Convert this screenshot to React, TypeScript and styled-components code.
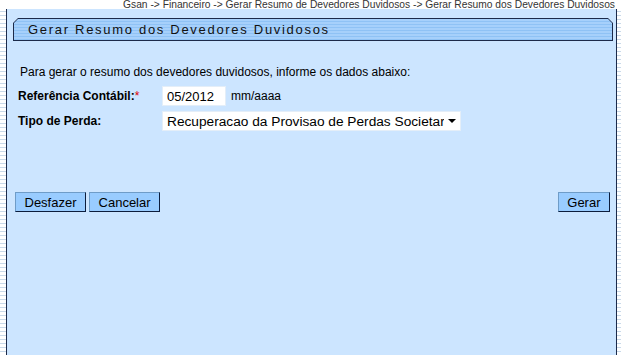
import React from 'react'
import styled, { createGlobalStyle } from 'styled-components'

const GlobalStyle = createGlobalStyle`
  html, body {
    margin: 0;
    padding: 0;
    height: 100%;
  }
  body {
    font-family: 'Liberation Sans', Arial, sans-serif;
    background: repeating-linear-gradient(
      to bottom,
      #ffffff 0px,
      #ffffff 3px,
      #c9d9e9 3px,
      #c9d9e9 4px
    );
  }
  #root {
    height: 100%;
  }
`

const Page = styled.div`
  display: flex;
  flex-direction: column;
  height: 355px;
`

const Crumb = styled.div`
  height: 9px;
  line-height: 9px;
  font-size: 10.25px;
  color: #333;
  text-align: right;
  padding-right: 6px;
  white-space: nowrap;
  background: #fff;
`

const Panel = styled.div`
  flex: 1;
  margin: 0 4px 0 6px;
  border-left: 1px solid #1c2a4a;
  border-right: 1px solid #1c2a4a;
  background: #cce5ff;
  padding: 9px 3px 0 6px;
  display: flex;
  flex-direction: column;
`

const TitleBar = styled.div`
  height: 23px;
  background: #1c2a4a;
  clip-path: polygon(5px 0, calc(100% - 5px) 0, 100% 5px, 100% 100%, 0 100%, 0 5px);
  padding: 1px;
  box-sizing: border-box;
`

const TitleInner = styled.div`
  height: 100%;
  clip-path: polygon(4px 0, calc(100% - 4px) 0, 100% 4px, 100% 100%, 0 100%, 0 4px);
  background: repeating-linear-gradient(
    to bottom,
    #a6d0fb 0px,
    #a6d0fb 2px,
    #8fc2f5 2px,
    #8fc2f5 3px
  );
  display: flex;
  align-items: center;
  padding-left: 14px;
  font-size: 13px;
  letter-spacing: 1.7px;
  color: #111;
`

const Intro = styled.p`
  margin: 24px 0 0 7px;
  font-size: 12px;
  line-height: 14px;
  color: #000;
`

const Row = styled.div<{ $gap: number }>`
  display: flex;
  align-items: center;
  margin-top: ${p => p.$gap}px;
  padding-left: 5px;
  height: 20px;
`

const Label = styled.label`
  width: 144px;
  font-size: 12px;
  font-weight: bold;
  color: #000;
`

const Required = styled.span`
  color: #e00000;
  font-weight: normal;
`

const TextInput = styled.input`
  box-sizing: border-box;
  width: 64px;
  height: 20px;
  border: 1px solid #e4eef8;
  background: #fff;
  font-family: 'Liberation Sans', Arial, sans-serif;
  font-size: 13px;
  padding: 0 4px;
  color: #000;
  outline: none;
`

const Hint = styled.span`
  margin-left: 5px;
  font-size: 12px;
  color: #000;
`

const SelectWrap = styled.div`
  position: relative;
  width: 299px;
  height: 20px;
`

const Select = styled.select`
  appearance: none;
  box-sizing: border-box;
  width: 100%;
  height: 20px;
  border: 1px solid #e4eef8;
  background: #fff;
  font-family: 'Liberation Sans', Arial, sans-serif;
  font-size: 13.7px;
  padding: 0 16px 0 4px;
  color: #000;
  outline: none;
`

const Caret = styled.span`
  position: absolute;
  right: 5px;
  top: 8px;
  width: 0;
  height: 0;
  border-left: 4px solid transparent;
  border-right: 4px solid transparent;
  border-top: 4px solid #000;
  pointer-events: none;
`

const Actions = styled.div`
  display: flex;
  gap: 3px;
  margin-top: 61px;
  padding-left: 2px;
  padding-right: 3px;
`

const Button = styled.button`
  box-sizing: border-box;
  height: 20px;
  padding: 0 8.5px;
  background: #99ccff;
  border: 1px solid;
  border-color: #6e9cc8 #0c1d3d #0c1d3d #6e9cc8;
  font-family: 'Liberation Sans', Arial, sans-serif;
  font-size: 13px;
  color: #000;
  cursor: pointer;
  &:last-child {
    margin-left: auto;
  }
`

export default function App() {
  return (
    <Page>
      <GlobalStyle />
      <Crumb>
        Gsan -&gt; Financeiro -&gt; Gerar Resumo de Devedores Duvidosos -&gt; Gerar Resumo dos Devedores Duvidosos
      </Crumb>
      <Panel>
        <TitleBar>
          <TitleInner>Gerar Resumo dos Devedores Duvidosos</TitleInner>
        </TitleBar>
        <Intro>Para gerar o resumo dos devedores duvidosos, informe os dados abaixo:</Intro>
        <Row $gap={7}>
          <Label>
            Referência Contábil:<Required>*</Required>
          </Label>
          <TextInput defaultValue="05/2012" />
          <Hint>mm/aaaa</Hint>
        </Row>
        <Row $gap={5}>
          <Label>Tipo de Perda:</Label>
          <SelectWrap>
            <Select defaultValue="1">
              <option value="1">Recuperacao da Provisao de Perdas Societarias</option>
            </Select>
            <Caret />
          </SelectWrap>
        </Row>
        <Actions>
          <Button>Desfazer</Button>
          <Button>Cancelar</Button>
          <Button>Gerar</Button>
        </Actions>
      </Panel>
    </Page>
  )
}
